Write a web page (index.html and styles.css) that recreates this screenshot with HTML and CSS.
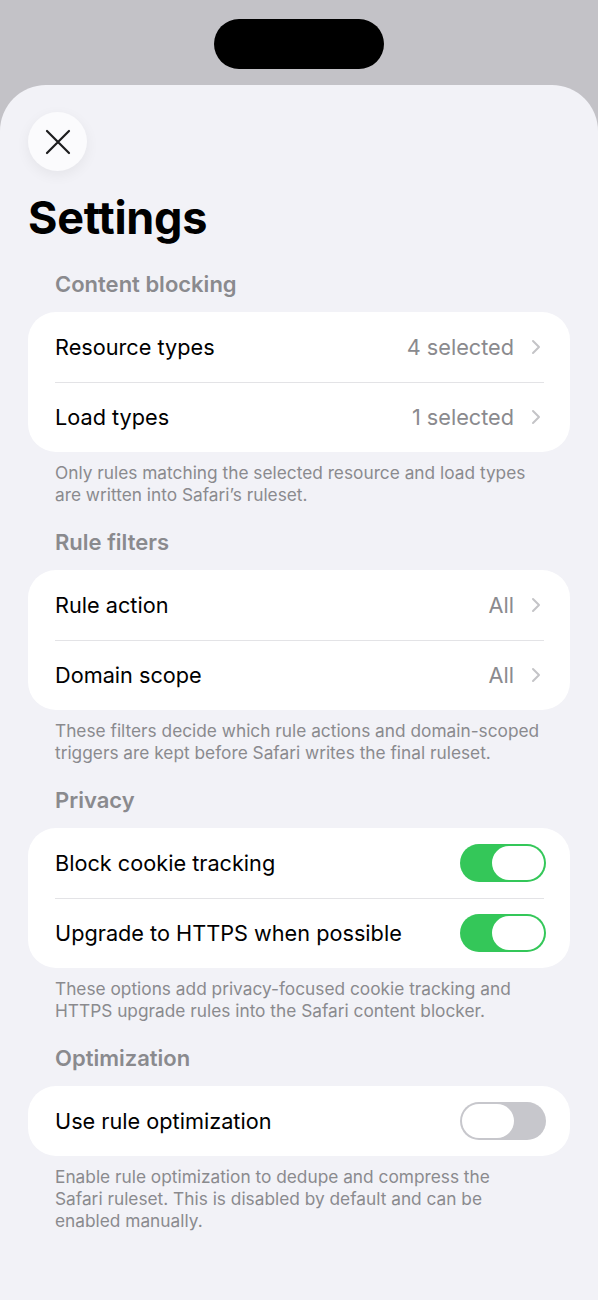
FILE: index.html
```html
<html>
  <head>
    <link rel="stylesheet" href="styles.css">
  </head>
  <body>
    <div class="status-area">
      <div class="island"></div>
    </div>

    <div class="sheet">
      <button class="close-btn" aria-label="Close">
        <svg width="26" height="26" viewBox="0 0 26 26">
          <path d="M2 2 L24 24 M24 2 L2 24" stroke="#1c1c1e" stroke-width="2.2" stroke-linecap="round" fill="none"/>
        </svg>
      </button>

      <h1 class="title">Settings</h1>

      <!-- Content blocking -->
      <div class="section">
        <div class="section-header">Content blocking</div>
        <div class="card">
          <div class="row">
            <span class="row-label">Resource types</span>
            <span class="row-value">4 selected</span>
            <span class="chevron"><svg width="10" height="16" viewBox="0 0 10 16"><path d="M2 2 L8 8 L2 14" stroke="#c4c4c7" stroke-width="2" fill="none" stroke-linecap="round" stroke-linejoin="round"/></svg></span>
          </div>
          <div class="row">
            <span class="row-label">Load types</span>
            <span class="row-value">1 selected</span>
            <span class="chevron"><svg width="10" height="16" viewBox="0 0 10 16"><path d="M2 2 L8 8 L2 14" stroke="#c4c4c7" stroke-width="2" fill="none" stroke-linecap="round" stroke-linejoin="round"/></svg></span>
          </div>
        </div>
        <div class="footnote">Only rules matching the selected resource and load types are written into Safari’s ruleset.</div>
      </div>

      <!-- Rule filters -->
      <div class="section">
        <div class="section-header">Rule filters</div>
        <div class="card">
          <div class="row">
            <span class="row-label">Rule action</span>
            <span class="row-value">All</span>
            <span class="chevron"><svg width="10" height="16" viewBox="0 0 10 16"><path d="M2 2 L8 8 L2 14" stroke="#c4c4c7" stroke-width="2" fill="none" stroke-linecap="round" stroke-linejoin="round"/></svg></span>
          </div>
          <div class="row">
            <span class="row-label">Domain scope</span>
            <span class="row-value">All</span>
            <span class="chevron"><svg width="10" height="16" viewBox="0 0 10 16"><path d="M2 2 L8 8 L2 14" stroke="#c4c4c7" stroke-width="2" fill="none" stroke-linecap="round" stroke-linejoin="round"/></svg></span>
          </div>
        </div>
        <div class="footnote">These filters decide which rule actions and domain-scoped triggers are kept before Safari writes the final ruleset.</div>
      </div>

      <!-- Privacy -->
      <div class="section">
        <div class="section-header">Privacy</div>
        <div class="card">
          <div class="row">
            <span class="row-label">Block cookie tracking</span>
            <span class="toggle on"><span class="knob"></span></span>
          </div>
          <div class="row">
            <span class="row-label">Upgrade to HTTPS when possible</span>
            <span class="toggle on"><span class="knob"></span></span>
          </div>
        </div>
        <div class="footnote">These options add privacy-focused cookie tracking and HTTPS upgrade rules into the Safari content blocker.</div>
      </div>

      <!-- Optimization -->
      <div class="section">
        <div class="section-header">Optimization</div>
        <div class="card">
          <div class="row">
            <span class="row-label">Use rule optimization</span>
            <span class="toggle"><span class="knob"></span></span>
          </div>
        </div>
        <div class="footnote">Enable rule optimization to dedupe and compress the Safari ruleset. This is disabled by default and can be enabled manually.</div>
      </div>
    </div>
  </body>
</html>
```

FILE: styles.css
```css
body {
  margin: 0;
  background-color: #c3c2c7;
  font-family: Inter, "Noto Sans", sans-serif;
  color: #000;
  -webkit-font-smoothing: antialiased;
}

.status-area {
  height: 85px;
  display: flex;
  justify-content: center;
}

.island {
  margin-top: 19px;
  width: 170px;
  height: 50px;
  border-radius: 25px;
  background: #000;
}

.sheet {
  background: #f2f2f7;
  border-radius: 46px 46px 0 0;
  min-height: 1215px;
  padding: 27px 28px 0 28px;
  box-sizing: border-box;
}

.close-btn {
  width: 59px;
  height: 59px;
  border-radius: 50%;
  border: none;
  background: #fbfbfd;
  box-shadow: 0 4px 14px rgba(0, 0, 0, 0.06);
  display: flex;
  align-items: center;
  justify-content: center;
  padding: 0;
}

.title {
  margin: 21px 0 4px 0;
  font-size: 45px;
  line-height: 52px;
  font-weight: 700;
  letter-spacing: -0.3px;
}

.section {
  padding-top: 22px;
}

.section-header {
  padding-left: 27px;
  font-size: 22px;
  line-height: 28px;
  font-weight: 600;
  color: #8a8a8e;
  margin-bottom: 14px;
}

.card {
  background: #fff;
  border-radius: 28px;
  overflow: hidden;
}

.row {
  height: 70px;
  margin-left: 27px;
  padding-right: 24px;
  display: flex;
  align-items: center;
  position: relative;
}

.row + .row::before {
  content: "";
  position: absolute;
  top: 0;
  left: 0;
  right: 26px;
  height: 1px;
  background: #e3e3e6;
}

.row-label {
  flex: 1;
  font-size: 21.7px;
}

.row-value {
  font-size: 21.7px;
  color: #8a8a8e;
}

.chevron {
  margin-left: 17px;
  margin-right: 5px;
  display: flex;
  align-items: center;
}

.footnote {
  padding: 10px 29px 0 27px;
  font-size: 17.3px;
  line-height: 22px;
  color: #8a8a8e;
}

.toggle {
  width: 86px;
  height: 38px;
  border-radius: 19px;
  background: #c7c7cc;
  box-sizing: border-box;
  padding: 2px;
  display: flex;
  justify-content: flex-start;
}

.toggle.on {
  background: #34c759;
  justify-content: flex-end;
}

.knob {
  width: 52px;
  height: 34px;
  border-radius: 17px;
  background: #fff;
}
```
